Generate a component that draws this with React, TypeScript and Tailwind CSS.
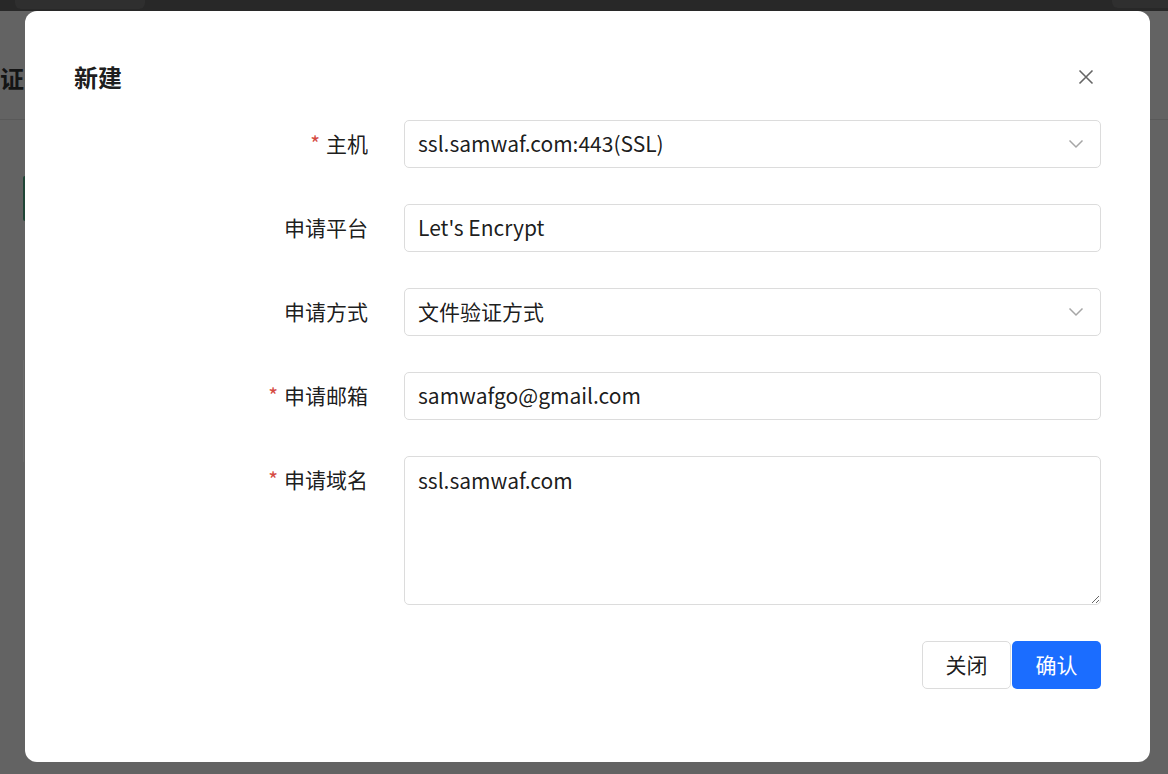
import React from "react";

const font = { fontFamily: '"Noto Sans CJK SC", "Noto Sans", sans-serif' };

function Chevron() {
  return (
    <svg width="16" height="10" viewBox="0 0 16 10" fill="none" className="absolute right-[16px] top-1/2 -translate-y-1/2">
      <path d="M1.5 1.5 L8 8 L14.5 1.5" stroke="#a6a6a6" strokeWidth="1.5" />
    </svg>
  );
}

function Label({ text, required }: { text: string; required?: boolean }) {
  return (
    <div className="w-[331px] shrink-0 pr-[36px] flex justify-end items-center h-[48px] text-[21px] text-[rgba(0,0,0,0.9)]">
      {required && <span className="text-[#d54941] mr-[6px]">*</span>}
      <span>{text}</span>
    </div>
  );
}

function Field({ value, select }: { value: string; select?: boolean }) {
  return (
    <div className="relative w-[697px] h-[48px] border border-[#dcdcdc] rounded-[5px] bg-white flex items-center pl-[13px] text-[21px] text-[rgba(0,0,0,0.9)]">
      <span>{value}</span>
      {select && <Chevron />}
    </div>
  );
}

export default function App() {
  return (
    <div className="relative w-[1168px] h-[774px] overflow-hidden bg-[#636363]" style={font}>
      {/* background page */}
      <div className="h-[11px] bg-[#282828] relative">
        <div className="absolute left-[15px] top-0 w-[130px] h-[9px] bg-[#2f2f2f] rounded-b-[6px]" />
        <div className="absolute right-0 top-0 w-[56px] h-[8px] bg-[#2f2f2f] rounded-bl-[6px]" />
      </div>
      <div className="h-[109px] border-b border-[#595959] pt-[49px] pl-[0px]">
        <div className="text-[24px] leading-[36px] font-bold text-[#141414] whitespace-nowrap">证书</div>
      </div>
      <div className="absolute left-[23px] top-[176px] w-[4px] h-[45px] bg-[#1f4636] rounded-l-[2px]" />
      <div className="absolute left-[23px] top-[360px] w-[4px] h-[102px] border-l border-[#6b6b6b]" />

      {/* modal */}
      <div className="absolute left-[25px] top-[11px] w-[1125px] h-[751px] bg-white rounded-[12px] pt-[48px] px-[48px]">
        <div className="flex items-center justify-between h-[36px] mb-[25px]">
          <span className="text-[24px] font-bold text-[rgba(0,0,0,0.9)] ml-[1px]">新建</span>
          <svg width="24" height="24" viewBox="0 0 24 24" fill="none" className="mr-[4px]">
            <path d="M5.5 5.5 L18.5 18.5 M18.5 5.5 L5.5 18.5" stroke="#666" strokeWidth="1.6" />
          </svg>
        </div>
        <div className="flex flex-col gap-[36px]">
          <div className="flex">
            <Label text="主机" required />
            <Field value="ssl.samwaf.com:443(SSL)" select />
          </div>
          <div className="flex">
            <Label text="申请平台" />
            <Field value="Let's Encrypt" />
          </div>
          <div className="flex">
            <Label text="申请方式" />
            <Field value="文件验证方式" select />
          </div>
          <div className="flex">
            <Label text="申请邮箱" required />
            <Field value="samwafgo@gmail.com" />
          </div>
          <div className="flex">
            <Label text="申请域名" required />
            <textarea
              readOnly
              defaultValue="ssl.samwaf.com"
              className="w-[697px] h-[149px] border border-[#dcdcdc] rounded-[5px] bg-white pl-[13px] pt-[7px] text-[21px] leading-[33px] text-[rgba(0,0,0,0.9)] outline-none resize"
              style={font}
            />
          </div>
        </div>
        <div className="flex justify-end gap-[1px] mt-[36px] mr-[1px]">
          <button className="w-[89px] h-[48px] border border-[#dcdcdc] rounded-[5px] bg-white text-[21px] text-[rgba(0,0,0,0.9)]">关闭</button>
          <button className="w-[89px] h-[48px] rounded-[5px] bg-[#1b6dff] text-[21px] text-white">确认</button>
        </div>
      </div>
    </div>
  );
}
